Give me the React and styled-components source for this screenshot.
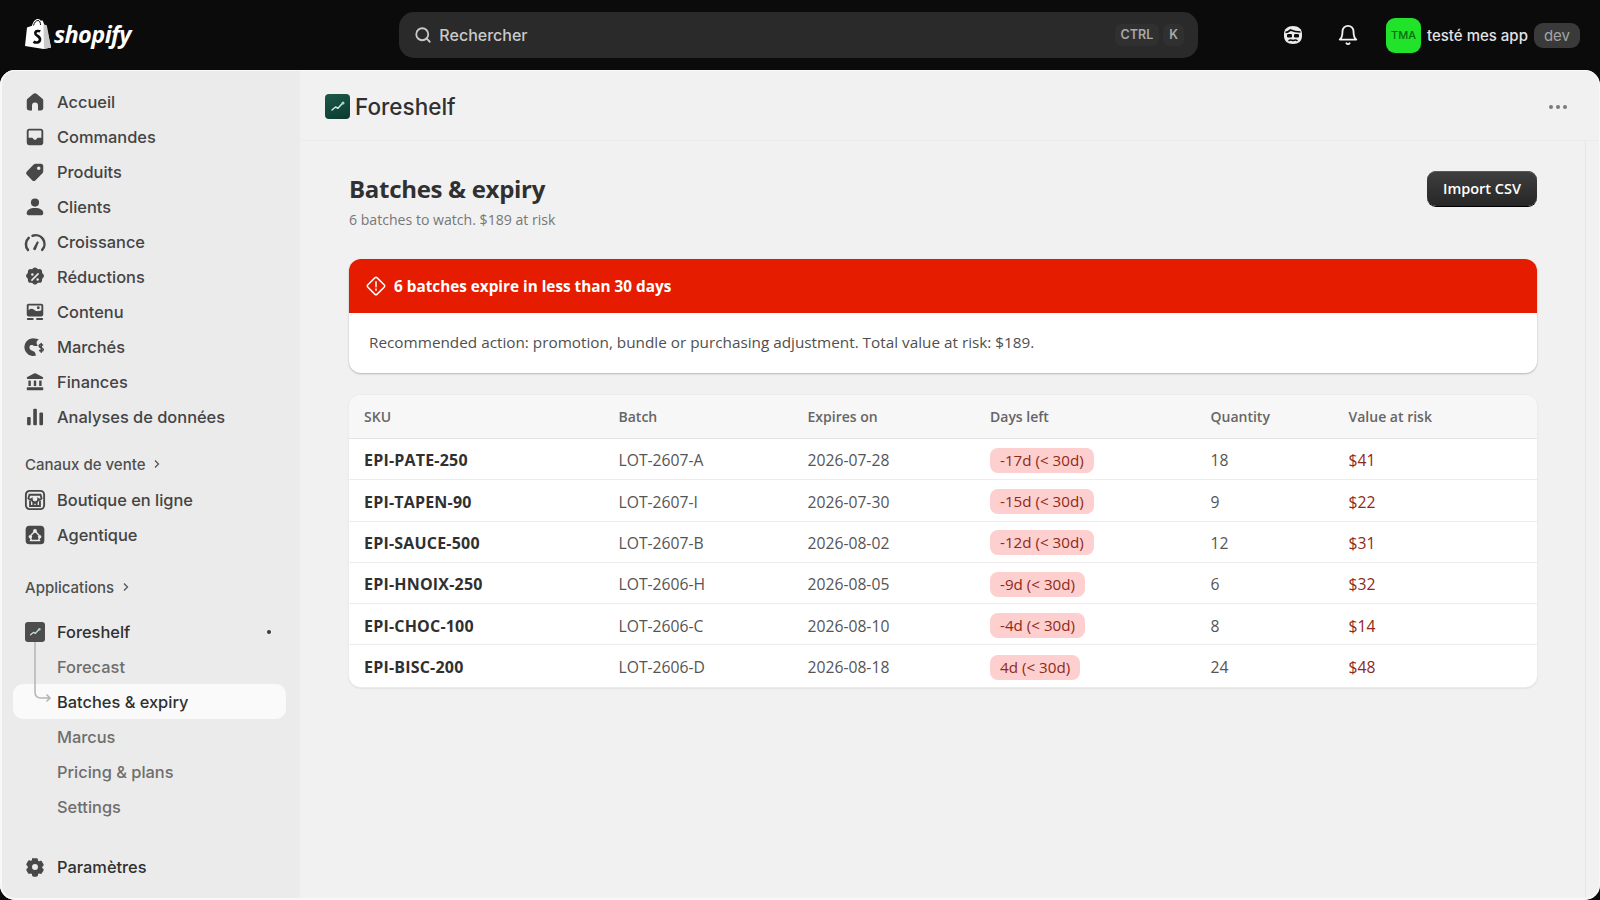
import React from 'react';
import styled, { createGlobalStyle } from 'styled-components';
import { FiSearch, FiBell } from 'react-icons/fi';

const GlobalStyle = createGlobalStyle`
    html, body {
        margin: 0;
        padding: 0;
        height: 100%;
        background: #0b0b0b;
        overflow: hidden;
    }
    * {
        box-sizing: border-box;
    }
`;

const NAV_ICONS = {
    home: <path d="M8.6 2.6a2.2 2.2 0 0 1 2.8 0l5.4 4.5c.5.4.7 1 .7 1.6v6.8c0 1.2-1 2.2-2.2 2.2h-2.6v-4.5a2.7 2.7 0 0 0-5.4 0v4.5H4.7a2.2 2.2 0 0 1-2.2-2.2V8.7c0-.6.3-1.2.7-1.6z" />,
    inbox: <path fillRule="evenodd" d="M4.7 2.5h10.6c1.2 0 2.2 1 2.2 2.2v10.6c0 1.2-1 2.2-2.2 2.2H4.7a2.2 2.2 0 0 1-2.2-2.2V4.7c0-1.2 1-2.2 2.2-2.2zM4.2 10.6h3.1c.5 0 .8.3 1 .7.3.7 1 1.1 1.7 1.1s1.4-.4 1.7-1.1c.2-.4.5-.7 1-.7h3.100V4.7a.6.6 0 0 0-.5-.5H4.7a.6.6 0 0 0-.5.5z" />,
    tag: <path fillRule="evenodd" d="M10.6 2.5h5c1 0 1.9.9 1.9 1.9v5c0 .7-.3 1.3-.7 1.8l-6.3 6.2a2.2 2.2 0 0 1-3.1 0l-4.8-4.8a2.2 2.2 0 0 1 0-3.1l6.2-6.3c.5-.4 1.1-.7 1.8-.7zM13.4 8.2a1.6 1.6 0 1 0 0-3.2 1.6 1.6 0 0 0 0 3.2z" />,
    person: <><circle cx="10" cy="6" r="3.7" /><path d="M2.5 15.6c0-2.8 2.9-4.6 7.5-4.6s7.5 1.8 7.5 4.6c0 1.2-.9 2-2 2H4.5c-1.1 0-2-.8-2-2z" /></>,
    gauge: <><path d="M3.6 17.2a8 8 0 0 1 .7-11" fill="none" stroke="currentColor" strokeWidth="2.300" strokeLinecap="round" /><path d="M7.800 4.300a8 8 0 0 1 8.700 12.900" fill="none" stroke="currentColor" strokeWidth="2.300" strokeLinecap="round" /><path d="M8.300 15.900l3.600-6.600 1.600.8-2.800 6.900a1.400 1.400 0 0 1-2.400-1.100z" /></>,
    discount: <><path d="M8.5 1.9c.8-.7 2.2-.7 3 0l1.2 1 1.6-.1c1.1 0 2 .9 2.1 2l.1 1.6 1.1 1.2c.7.8.7 2.1 0 2.9l-1.1 1.2-.1 1.6c-.1 1.1-1 2-2.1 2l-1.6-.1-1.2 1.1c-.8.7-2.2.7-3 0l-1.2-1.1-1.6.1c-1.1 0-2-.9-2.1-2l-.1-1.6-1.1-1.2a2.2 2.2 0 0 1 0-2.9l1.1-1.2.1-1.6c.1-1.1 1-2 2.1-2l1.6.1z" /><path d="M7.2 12.8l5.6-5.6" stroke="#ebebeb" strokeWidth="1.5" strokeLinecap="round" /><circle cx="7.6" cy="7.8" r="1.1" fill="#ebebeb" /><circle cx="12.4" cy="12.2" r="1.1" fill="#ebebeb" /></>,
    content: <><path fillRule="evenodd" d="M4.2 2.5h11.6c1 0 1.7.8 1.7 1.7v8.1c0 1-.8 1.7-1.7 1.7H4.2c-1 0-1.7-.8-1.7-1.7V4.2c0-1 .8-1.7 1.7-1.7zM4.2 4.2v4.2c1.8-1.7 3.6-1.6 5.2-.2 1.4 1.2 2.7 1.5 6.4.3V4.2zM13 7.4a1.3 1.3 0 1 0 0-2.6 1.3 1.3 0 0 0 0 2.6z" /><rect x="2.6" y="15.5" width="6.2" height="1.7" rx=".8" /><rect x="11" y="15.5" width="6.4" height="1.7" rx=".8" /></>,
    globe: <><path d="M9.5 2.2a8 8 0 0 1 4.2 1.2c-1.3.2-2.3 1.4-2.3 2.8 0 1 .4 1.8 1.1 2.4-1 .8-2.6.8-4.1 0C6.9 7.800 5.300 8.200 5 9.700c-.3 1.400.5 2.900 2 3.500 1.500.6 3 1.100 3.300 2.600.1.700.4 1.300.9 1.800A8 8 0 1 1 9.500 2.200z" /><path d="M16.800 8.200c-1.300-.8-3-.5-3 .8 0 2 3.700 1.300 3.700 3.400 0 1.300-1.800 1.700-3.300.8M15.700 6.800v8" fill="none" stroke="currentColor" strokeWidth="1.400" strokeLinecap="round" /></>,
    bank: <><path d="M9.100 2.300a2 2 0 0 1 1.800 0l6.100 3.200c.8.400.5 1.700-.4 1.700H3.400c-.9 0-1.200-1.300-.4-1.700z" /><rect x="4" y="8.700" width="2.200" height="5" rx=".4" /><rect x="8.900" y="8.700" width="2.200" height="5" rx=".4" /><rect x="13.800" y="8.700" width="2.200" height="5" rx=".4" /><rect x="2.500" y="14.800" width="15" height="2.700" rx=".7" /></>,
    chart: <><rect x="2.800" y="10" width="3.300" height="7.500" rx=".9" /><rect x="8.400" y="2.500" width="3.300" height="15" rx=".9" /><rect x="14" y="6" width="3.300" height="11.500" rx=".9" /></>,
    gear: <path fillRule="evenodd" d="M8.200 2.100c.4-.2 3.200-.2 3.600 0 .6.200.8.800.9 1.400l.1.800c.3.100.6.300.9.500l.8-.3c.6-.2 1.200-.2 1.600.3.300.3 1.700 2.700 1.800 3.100.1.600-.3 1-.7 1.400l-.6.500v1.100l.6.500c.4.400.8.800.7 1.400-.1.400-1.500 2.800-1.800 3.100-.4.500-1 .5-1.600.3l-.8-.3c-.3.200-.6.400-.9.500l-.1.800c-.1.600-.3 1.200-.9 1.400-.4.200-3.200.2-3.600 0-.6-.2-.8-.8-.9-1.400l-.1-.8c-.3-.1-.6-.3-.9-.5l-.8.300c-.6.200-1.200.2-1.600-.3-.3-.3-1.700-2.700-1.800-3.100-.1-.6.3-1 .7-1.400l.6-.5V9.400l-.6-.5c-.4-.4-.8-.8-.7-1.400.1-.4 1.500-2.800 1.800-3.100.4-.5 1-.5 1.600-.3l.8.3c.3-.2.6-.4.900-.5l.1-.8c.1-.6.300-1.200.900-1.400zM10 12.700a2.700 2.700 0 1 0 0-5.400 2.700 2.700 0 0 0 0 5.400z" />,
};

const CHANNEL_ICONS = {
    store: <g fill="none" stroke="currentColor" strokeWidth="1.700"><rect x="1.700" y="1.700" width="16.600" height="16.600" rx="3.500" /><path d="M5 5.200h10l1 3.300a2 2 0 0 1-3 .6 2.500 2.500 0 0 1-6 0 2 2 0 0 1-3-.6z" /><path d="M5.500 10.500v5h9v-5M8.500 15.500v-3h3v3" /></g>,
    agent: <><rect x="1.500" y="1.500" width="17" height="17" rx="3.500" /><circle cx="10" cy="6.300" r="1.800" fill="#ebebeb" /><circle cx="5.800" cy="11.600" r="1.600" fill="#ebebeb" /><circle cx="14.200" cy="11.600" r="1.600" fill="#ebebeb" /><path d="M5.800 15h8.400M6.500 10 9 7.500M13.500 10 11 7.500M6 13l1 2M14 13l-1 2" stroke="#ebebeb" strokeWidth="1.300" strokeLinecap="round" /></>,
};

const MAIN_ITEMS = [
    ['home', 'Accueil'],
    ['inbox', 'Commandes'],
    ['tag', 'Produits'],
    ['person', 'Clients'],
    ['gauge', 'Croissance'],
    ['discount', 'Réductions'],
    ['content', 'Contenu'],
    ['globe', 'Marchés'],
    ['bank', 'Finances'],
    ['chart', 'Analyses de données'],
];

const BATCHES = [
    { sku: 'EPI-PATE-250', batch: 'LOT-2607-A', expires: '2026-07-28', days: '-17d (< 30d)', qty: 18, value: '$41' },
    { sku: 'EPI-TAPEN-90', batch: 'LOT-2607-I', expires: '2026-07-30', days: '-15d (< 30d)', qty: 9, value: '$22' },
    { sku: 'EPI-SAUCE-500', batch: 'LOT-2607-B', expires: '2026-08-02', days: '-12d (< 30d)', qty: 12, value: '$31' },
    { sku: 'EPI-HNOIX-250', batch: 'LOT-2606-H', expires: '2026-08-05', days: '-9d (< 30d)', qty: 6, value: '$32' },
    { sku: 'EPI-CHOC-100', batch: 'LOT-2606-C', expires: '2026-08-10', days: '-4d (< 30d)', qty: 8, value: '$14' },
    { sku: 'EPI-BISC-200', batch: 'LOT-2606-D', expires: '2026-08-18', days: '4d (< 30d)', qty: 24, value: '$48' },
];

function NavIcon({ children }) {
    return <IconSvg viewBox="0 0 20 20" fill="currentColor">{children}</IconSvg>;
}

function ShopifyBag() {
    return (
        <svg width="28" height="32" viewBox="0 0 28 32">
            <path d="M3 9.500 8 7.800C9 3.500 11.500 1 14 1c1.300 0 2.200.8 2.700 1.700l2-.300 1.600 4.400 1.700.300L27 29.500 19.500 31 1 28z" fill="#fff" />
            <path d="M19.500 6.800 20 31l7-1.500L22.800 7.200z" fill="#c9c9c9" />
            <path d="M9.500 7.500C10.300 4.500 12 2.500 14 2.500c1.700 0 2.500 2 2.500 4.500" fill="none" stroke="#0b0b0b" strokeWidth="1" />
            <path d="M16.200 13.500c-1-.700-4.700-1.200-4.900 1.600-.2 3 5 2.700 4.700 6.500-.2 3.200-4.200 3.600-6.500 2" fill="none" stroke="#0b0b0b" strokeWidth="2.600" />
        </svg>
    );
}

function AppGlyph({ size }) {
    return (
        <svg width={size} height={size} viewBox="0 0 25 25">
            <path d="M7 16l3.500-3 2.500 1.200 4-4.500" fill="none" stroke="#cfe8dc" strokeWidth="1.500" strokeLinecap="round" strokeLinejoin="round" />
            <circle cx="18" cy="9" r="1.500" fill="#9fe0bf" />
        </svg>
    );
}

export default function App() {
    return (
        <Page>
            <GlobalStyle />
            <TopBar>
                <Brand>
                    <ShopifyBag />
                    <BrandName>shopify</BrandName>
                </Brand>
                <SearchBox>
                    <FiSearch />
                    <SearchLabel>Rechercher</SearchLabel>
                    <Keys>
                        <Key>CTRL</Key>
                        <Key>K</Key>
                    </Keys>
                </SearchBox>
                <TopActions>
                    <TopIcon>
                        <svg width="22" height="22" viewBox="0 0 22 22" fill="none">
                            <path d="M2 10c0-5 3.500-8 9-8s9 3 9 8v2c0 5-3.500 8-9 8s-9-3-9-8z" fill="#ececec" />
                            <path d="M3.500 8.300c2.500 0 3.800-1.300 5-2.300 2.500 1.200 6 2 10 2" stroke="#0b0b0b" strokeWidth="1.700" />
                            <rect x="5" y="10" width="5" height="3.400" rx="1.200" fill="#0b0b0b" />
                            <rect x="12" y="10" width="5" height="3.400" rx="1.200" fill="#0b0b0b" />
                            <path d="M6.500 16.800c1.500-1.200 3-1 4.500-.2 1.500-.8 3-1 4.500.2" stroke="#0b0b0b" strokeWidth="1.500" />
                        </svg>
                    </TopIcon>
                    <TopIcon>
                        <FiBell />
                    </TopIcon>
                    <Account>
                        <Avatar>TMA</Avatar>
                        <AccountName>testé mes app</AccountName>
                        <DevBadge>dev</DevBadge>
                    </Account>
                </TopActions>
            </TopBar>

            <Panel>
                <Sidebar>
                    <NavGroup>
                        {MAIN_ITEMS.map(([icon, label]) => (
                            <NavItem key={label}>
                                <NavIcon>{NAV_ICONS[icon]}</NavIcon>
                                {label}
                            </NavItem>
                        ))}
                    </NavGroup>

                    <SectionTitle $top={21}>
                        Canaux de vente <Chevron viewBox="0 0 8 10"><path d="M2 1.500 5.500 5 2 8.500" /></Chevron>
                    </SectionTitle>
                    <NavGroup>
                        <NavItem><NavIcon>{CHANNEL_ICONS.store}</NavIcon>Boutique en ligne</NavItem>
                        <NavItem><NavIcon>{CHANNEL_ICONS.agent}</NavIcon>Agentique</NavItem>
                    </NavGroup>

                    <SectionTitle $top={26}>
                        Applications <Chevron viewBox="0 0 8 10"><path d="M2 1.500 5.500 5 2 8.500" /></Chevron>
                    </SectionTitle>
                    <AppGroup>
                        <TreeLine viewBox="0 0 18 62" width="18" height="62">
                            <path d="M1 1v50c0 4 2 6 6 6h9M12.500 53.500 16 57l-3.500 3.500" />
                        </TreeLine>
                        <NavItem $strong>
                            <AppTile><AppGlyph size={20} /></AppTile>
                            Foreshelf
                            <PinDot />
                        </NavItem>
                        <SubItem>Forecast</SubItem>
                        <SubItem $active>Batches &amp; expiry</SubItem>
                        <SubItem>Marcus</SubItem>
                        <SubItem>Pricing &amp; plans</SubItem>
                        <SubItem>Settings</SubItem>
                    </AppGroup>

                    <SidebarFooter>
                        <NavItem $strong><NavIcon>{NAV_ICONS.gear}</NavIcon>Paramètres</NavItem>
                    </SidebarFooter>
                </Sidebar>

                <Main>
                    <AppHeader>
                        <AppTitle>
                            <AppLogo><AppGlyph size={25} /></AppLogo>
                            Foreshelf
                        </AppTitle>
                        <MoreDots><i /><i /><i /></MoreDots>
                    </AppHeader>
                    <Scroller>
                        <Content>
                            <PageHead>
                                <div>
                                    <PageTitle>Batches &amp; expiry</PageTitle>
                                    <PageSub>6 batches to watch. $189 at risk</PageSub>
                                </div>
                                <ImportButton>Import CSV</ImportButton>
                            </PageHead>

                            <AlertCard>
                                <AlertHead>
                                    <svg width="20" height="20" viewBox="0 0 20 20" fill="none" stroke="#fff" strokeWidth="1.500">
                                        <path d="M8.800 1.900a1.700 1.700 0 0 1 2.400 0l6.900 6.900a1.700 1.700 0 0 1 0 2.400l-6.900 6.900a1.700 1.700 0 0 1-2.400 0l-6.900-6.900a1.700 1.700 0 0 1 0-2.400z" />
                                        <path d="M10 5.800v5M10 13v1.200" strokeLinecap="round" />
                                    </svg>
                                    6 batches expire in less than 30 days
                                </AlertHead>
                                <AlertBody>
                                    Recommended action: promotion, bundle or purchasing adjustment. Total value at risk: $189.
                                </AlertBody>
                            </AlertCard>

                            <TableCard>
                                <HeadRow>
                                    <span>SKU</span>
                                    <span>Batch</span>
                                    <span>Expires on</span>
                                    <span>Days left</span>
                                    <span>Quantity</span>
                                    <span>Value at risk</span>
                                </HeadRow>
                                {BATCHES.map(row => (
                                    <BatchRow key={row.sku}>
                                        <Sku>{row.sku}</Sku>
                                        <span>{row.batch}</span>
                                        <span>{row.expires}</span>
                                        <PillCell><DaysPill>{row.days}</DaysPill></PillCell>
                                        <span>{row.qty}</span>
                                        <RiskValue>{row.value}</RiskValue>
                                    </BatchRow>
                                ))}
                            </TableCard>
                        </Content>
                    </Scroller>
                </Main>
            </Panel>
        </Page>
    );
}

const Page = styled.div`
    width: 1600px;
    height: 900px;
    display: flex;
    flex-direction: column;
    background: #0b0b0b;
    overflow: hidden;
    font-family: Inter, "Liberation Sans", sans-serif;
`;

const TopBar = styled.header`
    height: 70px;
    flex: none;
    display: flex;
    align-items: center;
    padding: 0 20px 0 24px;
`;

const Brand = styled.div`
    width: 376px;
    display: flex;
    align-items: center;
    gap: 2px;
    margin-top: -2px;
`;

const BrandName = styled.span`
    font-family: "Open Sans", sans-serif;
    font-weight: 700;
    font-style: italic;
    font-size: 23.500px;
    letter-spacing: -0.6px;
    color: #fff;
`;

const SearchBox = styled.div`
    width: 800px;
    height: 46px;
    display: flex;
    align-items: center;
    gap: 7px;
    padding: 0 14px 0 15px;
    border-radius: 15px;
    background: #2a2a2a;
    color: #c9c9c9;
    svg {
        width: 18px;
        height: 18px;
        stroke-width: 2.4;
    }
`;

const SearchLabel = styled.span`
    flex: 1;
    font-size: 16px;
    font-weight: 500;
`;

const Keys = styled.div`
    display: flex;
    gap: 4px;
`;

const Key = styled.kbd`
    font-family: Inter, sans-serif;
    font-size: 12.500px;
    font-weight: 600;
    color: #a8a8a8;
    background: #303030;
    border-radius: 6px;
    padding: 4px 6px;
    line-height: 14px;
`;

const TopActions = styled.div`
    flex: 1;
    display: flex;
    align-items: center;
    padding-left: 84px;
`;

const TopIcon = styled.div`
    width: 22px;
    height: 22px;
    flex: none;
    margin-right: 33px;
    color: #f2f2f2;
    svg {
        width: 22px;
        height: 22px;
        stroke-width: 2;
        display: block;
    }
`;

const Account = styled.div`
    display: flex;
    align-items: center;
    margin-left: -6px;
    white-space: nowrap;
`;

const Avatar = styled.div`
    width: 35px;
    height: 35px;
    flex: none;
    border-radius: 9px;
    background: #20e32a;
    color: #0d6a12;
    font-size: 11px;
    font-weight: 500;
    display: flex;
    align-items: center;
    justify-content: center;
`;

const AccountName = styled.span`
    margin-left: 6px;
    font-size: 15px;
    font-weight: 500;
    color: #e3e3e3;
`;

const DevBadge = styled.span`
    margin-left: 6px;
    height: 25px;
    padding: 0 10px;
    border-radius: 9px;
    background: #3a3a3a;
    color: #a4a4a4;
    font-size: 15px;
    line-height: 25px;
`;

const Panel = styled.div`
    flex: 1;
    display: flex;
    min-height: 0;
    border-radius: 15px;
    overflow: hidden;
    background: #f1f1f1;
    position: relative;
    &::after {
        content: '';
        position: absolute;
        inset: 0;
        border: solid #f8f8f8;
        border-width: 1px 1px 2px 2px;
        border-radius: 15px;
        pointer-events: none;
    }
`;

const Sidebar = styled.aside`
    width: 300px;
    flex: none;
    background: #ebebeb;
    padding: 14px 14px 16px 13px;
    display: flex;
    flex-direction: column;
`;

const NavGroup = styled.nav`
    display: flex;
    flex-direction: column;
`;

const NavItem = styled.div`
    height: 35px;
    display: flex;
    align-items: center;
    gap: 11.500px;
    padding-left: 10.500px;
    font-size: 16.400px;
    font-weight: 500;
    color: ${props => props.$strong ? '#303030' : '#444444'};
    position: relative;
`;

const IconSvg = styled.svg`
    width: 22px;
    height: 22px;
    flex: none;
    color: #484848;
`;

const SectionTitle = styled.div`
    display: flex;
    align-items: center;
    gap: 8px;
    margin-top: ${props => props.$top}px;
    margin-bottom: 9px;
    padding-left: 12px;
    height: 18px;
    font-size: 15px;
    font-weight: 500;
    color: #4f4f4f;
`;

const Chevron = styled.svg`
    width: 8px;
    height: 10px;
    fill: none;
    stroke: #555555;
    stroke-width: 1.300;
`;

const AppGroup = styled.div`
    display: flex;
    flex-direction: column;
    position: relative;
    margin-top: 9px;
`;

const TreeLine = styled.svg`
    position: absolute;
    left: 21px;
    top: 27px;
    fill: none;
    stroke: #b4b4b4;
    stroke-width: 1.500;
    z-index: 1;
`;

const AppTile = styled.div`
    width: 20px;
    height: 20px;
    flex: none;
    margin-left: 1px;
    margin-right: 1px;
    border-radius: 3px;
    background: #4d4d4d;
`;

const PinDot = styled.span`
    position: absolute;
    right: 15px;
    top: 16px;
    width: 4px;
    height: 4px;
    border-radius: 50%;
    background: #3a3a3a;
`;

const SubItem = styled.div`
    height: 35px;
    display: flex;
    align-items: center;
    padding-left: 44px;
    font-size: 16.400px;
    font-weight: 500;
    border-radius: 10px;
    color: ${props => props.$active ? '#303030' : '#6e6e6e'};
    background: ${props => props.$active ? '#fafafa' : 'transparent'};
`;

const SidebarFooter = styled.div`
    margin-top: auto;
`;

const Main = styled.main`
    flex: 1;
    min-width: 0;
    display: flex;
    flex-direction: column;
`;

const AppHeader = styled.div`
    height: 71px;
    flex: none;
    padding: 3px 33px 0 25px;
    display: flex;
    align-items: center;
    justify-content: space-between;
    border-bottom: 1px solid #ebebeb;
`;

const AppTitle = styled.div`
    display: flex;
    align-items: center;
    gap: 5px;
    font-size: 22.500px;
    font-weight: 500;
    color: #303030;
`;

const AppLogo = styled.div`
    width: 25px;
    height: 25px;
    border-radius: 4px;
    background: linear-gradient(160deg, #1b5a48, #0c3a30);
`;

const MoreDots = styled.div`
    display: flex;
    gap: 3px;
    i {
        width: 4px;
        height: 4px;
        border-radius: 50%;
        background: #7a7a7a;
    }
`;

const Scroller = styled.div`
    flex: 1;
    min-height: 0;
    padding-right: 14px;
    display: flex;
`;

const Content = styled.div`
    flex: 1;
    padding: 30px 48px 0 49px;
    border-right: 1px solid #e6e6e6;
    font-family: "Open Sans", "Noto Sans", sans-serif;
`;

const PageHead = styled.div`
    display: flex;
    align-items: flex-start;
    justify-content: space-between;
    height: 88px;
`;

const PageTitle = styled.h1`
    margin: 1px 0 0;
    font-size: 24px;
    line-height: 34px;
    font-weight: 700;
    color: #303030;
    letter-spacing: -0.3px;
`;

const PageSub = styled.p`
    margin: 4px 0 0;
    font-size: 14.100px;
    line-height: 20px;
    color: #777777;
`;

const ImportButton = styled.button`
    width: 110px;
    height: 35px;
    border: none;
    border-radius: 9px;
    background: linear-gradient(#3f3f3f, #262626);
    box-shadow: 0 1px 0 #000, inset 0 1px 0 #5a5a5a;
    color: #fff;
    font-family: inherit;
    font-size: 14.500px;
    font-weight: 600;
`;

const AlertCard = styled.section`
    border-radius: 12px;
    overflow: hidden;
    background: #fff;
    box-shadow: 0 1px 2px rgba(0, 0, 0, 0.25);
`;

const AlertHead = styled.div`
    height: 54px;
    display: flex;
    align-items: center;
    gap: 8px;
    padding-left: 17px;
    background: #e51c00;
    color: #fff;
    font-size: 15.300px;
    font-weight: 700;
`;

const AlertBody = styled.div`
    height: 60px;
    display: flex;
    align-items: center;
    padding: 0 20px 2px;
    font-size: 15.300px;
    color: #4f4f4f;
`;

const TableCard = styled.section`
    margin-top: 22px;
    border-radius: 12px;
    overflow: hidden;
    background: #fff;
    box-shadow: 0 0 0 1px #ececec, 0 1px 2px rgba(0, 0, 0, 0.18);
`;

const columns = '254.500px 189px 182.500px 220.500px 138px 1fr';

const HeadRow = styled.div`
    display: grid;
    grid-template-columns: ${columns};
    height: 44px;
    align-items: center;
    padding-left: 15px;
    background: #f7f7f7;
    border-bottom: 1px solid #e3e3e3;
    font-size: 14px;
    font-weight: 600;
    color: #666666;
`;

const BatchRow = styled.div`
    display: grid;
    grid-template-columns: ${columns};
    height: 41.300px;
    align-items: center;
    padding: 2.500px 0 0 15px;
    border-bottom: 1px solid #ededed;
    font-size: 15.700px;
    color: #555555;
    &:last-child {
        border-bottom: none;
    }
`;

const Sku = styled.span`
    font-size: 16px;
    font-weight: 700;
    letter-spacing: 0.2px;
    color: #303030;
`;

const PillCell = styled.span`
    display: flex;
    align-items: center;
`;

const DaysPill = styled.span`
    height: 25px;
    line-height: 25px;
    padding: 0 10px;
    border-radius: 8px;
    background: #fdcfcf;
    color: #8e2a18;
    font-size: 15.200px;
`;

const RiskValue = styled.span`
    color: #8e2a18;
`;
